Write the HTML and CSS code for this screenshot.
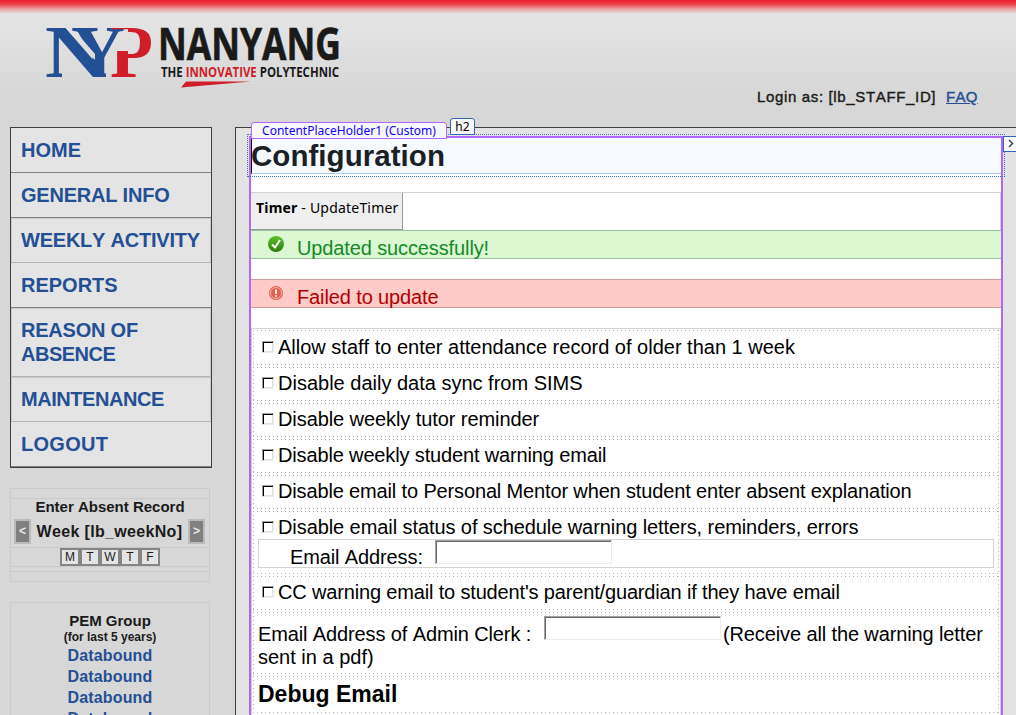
FILE: index.html
```
<!DOCTYPE html>
<html lang="en">
<head>
<meta charset="utf-8">
<title>Configuration</title>
<link rel="stylesheet" href="styles.css">
</head>
<body>
<div class="page">
  <header class="header">
    <svg class="logo" width="310" height="72" viewBox="40 20 310 72" role="img" aria-label="Nanyang Polytechnic">
      <defs>
        <clipPath id="clip-n"><polygon points="44,24 62,24 95,60 95,44 106,44 106,78 84,78 62,49 62,78 44,78"/></clipPath>
        <clipPath id="clip-y"><polygon points="68,24 126,24 126,34 106,54 106,78 95,78 95,54 76,32 68,30"/></clipPath>
        <clipPath id="clip-p"><path clip-rule="evenodd" d="M108 24H154V78H108ZM110 29.200H128V51H110Z"/></clipPath>
      </defs>
      <g class="mark">
        <g clip-path="url(#clip-n)"><text x="45" y="76.500" textLength="61" lengthAdjust="spacingAndGlyphs" fill="#234f95">N</text></g>
        <g clip-path="url(#clip-y)"><text x="71" y="76.500" textLength="54" lengthAdjust="spacingAndGlyphs" fill="#234f95">Y</text></g>
        <g clip-path="url(#clip-p)"><text x="110" y="76.500" textLength="43" lengthAdjust="spacingAndGlyphs" fill="#cf1e28">P</text></g>
      </g>
      <text class="logo-name" x="158" y="59.500" textLength="183" lengthAdjust="spacingAndGlyphs">NANYANG</text>
      <text class="logo-sub" x="161" y="76.500" textLength="178" lengthAdjust="spacingAndGlyphs">THE <tspan fill="#cf1e28">INNOVATIVE</tspan> POLYTECHNIC</text>
      <polygon points="186,81.500 251,81.500 181,87.500" fill="#cf1e28"/>
    </svg>
    <div class="login"><span class="login-as">Login as: [lb_STAFF_ID]</span><a class="faq" href="#">FAQ</a></div>
  </header>
  <div class="columns">
    <aside class="side">
      <nav class="menu">
        <a href="#" class="l1">HOME</a>
        <a href="#" class="l2">GENERAL INFO</a>
        <a href="#" class="boxed l3">WEEKLY ACTIVITY</a>
        <a href="#" class="l4">REPORTS</a>
        <a href="#" class="boxed l5">REASON OF<br><span class="l5b">ABSENCE</span></a>
        <a href="#" class="boxed l6">MAINTENANCE</a>
        <a href="#" class="l7">LOGOUT</a>
      </nav>
      <section class="absent">
        <div class="absent-top"></div>
        <div class="absent-main">
          <h3>Enter Absent Record</h3>
          <div class="week"><span class="step">&lt;</span><b>Week [lb_weekNo]</b><span class="step">&gt;</span></div>
        </div>
        <div class="days"><span>M</span><span>T</span><span>W</span><span>T</span><span>F</span></div>
        <div class="absent-gap"></div>
      </section>
      <section class="pem">
        <h3>PEM Group</h3>
        <p>(for last 5 years)</p>
        <a href="#">Databound</a>
        <a href="#">Databound</a>
        <a href="#">Databound</a>
        <a href="#">Databound</a>
      </section>
    </aside>
    <main class="main">
      <div class="holder">
        <h2>Configuration</h2>
        <div class="timer-row"><div class="timer"><b>Timer</b> - UpdateTimer</div></div>
        <div class="msg ok">
          <svg width="18" height="18" viewBox="0 0 18 18"><defs><linearGradient id="g" x2="0" y2="1"><stop offset="0" stop-color="#5fc02a"/><stop offset="1" stop-color="#2c7d0c"/></linearGradient></defs><circle cx="9" cy="9" r="8" fill="url(#g)"/><path d="M5 9.500L8 12.500L13 5" fill="none" stroke="#fff" stroke-width="2"/></svg>
          <span>Updated successfully!</span>
        </div>
        <div class="msg bad">
          <svg width="18" height="18" viewBox="0 0 18 18"><circle cx="9" cy="9" r="7" fill="#e2604f"/><circle cx="9" cy="9" r="5.500" fill="none" stroke="#f6c1b4" stroke-width=".8"/><path d="M9 5.500V10M9 11.200V12.800" stroke="#fff" stroke-width="1.800"/></svg>
          <span>Failed to update</span>
        </div>
        <div class="form">
          <div class="row first"><i class="check"></i><span class="t1">Allow staff to enter attendance record of older than 1 week</span></div>
          <div class="row"><i class="check"></i><span class="t2">Disable daily data sync from SIMS</span></div>
          <div class="row"><i class="check"></i><span class="t3">Disable weekly tutor reminder</span></div>
          <div class="row"><i class="check"></i><span class="t4">Disable weekly student warning email</span></div>
          <div class="row"><i class="check"></i><span class="t5">Disable email to Personal Mentor when student enter absent explanation</span></div>
          <div class="row tall"><i class="check"></i><span class="t6">Disable email status of schedule warning letters, reminders, errors</span>
            <div class="email-box"><span class="t7">Email Address:</span><i class="field"></i></div>
          </div>
          <div class="row"><i class="check"></i><span class="t8">CC warning email to student's parent/guardian if they have email</span></div>
          <div class="row clerk"><div class="clerk-line"><span class="t9">Email Address of Admin Clerk :</span><i class="field"></i><span class="t10">(Receive all the warning letter</span></div><span class="t11">sent in a pdf)</span></div>
          <div class="row debug"><span>Debug Email</span></div>
          <div class="row"></div>
        </div>
        <div class="h2-outline"></div>
        <div class="tag holder-tag">ContentPlaceHolder1 (Custom)</div>
        <div class="tag h2-tag">h2</div>
        <div class="smart-tag"><svg width="8" height="10" viewBox="0 0 8 10"><path d="M2 1L5.500 4.500L2 8" fill="none" stroke="#2b4c80" stroke-width="1.500"/></svg></div>
      </div>
    </main>
  </div>
</div>
</body>
</html>
```
FILE: styles.css
```
* { box-sizing: border-box; }
body { margin: 0; font-family: "Liberation Sans", Arial, sans-serif; color: #1a1a1a; font-kerning: none; }
a { color: #234f95; text-decoration: none; }
h2, h3, p { margin: 0; }
.page { width: 1016px; height: 715px; overflow: hidden; background: linear-gradient(#e81f2c 0, #ec4048 4px, #e8a0a2 9px, #e4e4e4 14px, #e3e3e3 25px, #d7d7d7 95px); }
.header { height: 127px; padding: 20px 38px 0 40px; display: flex; justify-content: space-between; }
.logo { display: block; }
.mark { font: bold 74px "Liberation Serif", serif; }
.logo-name { font: bold 45px "Open Sans", sans-serif; fill: #1a1a1a; stroke: #1a1a1a; stroke-width: .7px; }
.logo-sub { font: bold 13.500px "Open Sans", sans-serif; fill: #1a1a1a; }
.login { padding-top: 68px; font-size: 15px; line-height: 17px; display: flex; gap: 9px; -webkit-text-stroke: .4px; }
.login-as { width: 180px; letter-spacing: .65px; white-space: nowrap; }
.faq { width: 32px; text-decoration: underline; letter-spacing: .3px; }
.columns { display: flex; height: 588px; }
.side { width: 202px; margin-left: 10px; flex: none; }
.menu { border: 1px solid #3f3f3f; background: #e4e4e4; font-weight: bold; font-size: 20px; line-height: 24px; height: 341px; }
.menu a { display: block; padding: 10px; border-bottom: 1px solid #808080; white-space: nowrap; }
.menu a.boxed { border: 1px solid #cacaca; border-bottom-color: #b4b4b4; padding: 9px 9px 10px; }
.menu .l2, .menu .l3, .menu .l5 { letter-spacing: -.22px; }
.menu .l5b { letter-spacing: -.5px; }
.menu .l6 { letter-spacing: -.45px; }
.menu .l7 { letter-spacing: .3px; }
.absent { width: 200px; height: 94px; margin-top: 20px; border: 1px solid #cacaca; text-align: center; }
.absent-top { height: 10px; border-bottom: 1px solid #cacaca; }
.absent-main { height: 49px; border-bottom: 1px solid #cacaca; }
h3 { font-size: 15px; line-height: 15px; padding-bottom: 2px; }
.week { display: flex; justify-content: space-between; align-items: center; padding: 0 4px 0 3px; margin-top: 3px; }
.week b { font-size: 16px; line-height: 25px; white-space: nowrap; letter-spacing: .33px; }
.step { width: 17px; height: 25px; background: #808080; border: 2px solid #bbb; color: #e8e8e8; font-size: 12px; font-weight: bold; line-height: 21px; }
.days { display: flex; justify-content: center; height: 19px; border-bottom: 1px solid #cacaca; }
.days span { width: 20px; height: 18px; border: 2px solid #858585; background: #e4e4e4; font-size: 12px; line-height: 15px; }
.absent-gap { height: 5px; border-bottom: 1px solid #cacaca; }
.pem { width: 200px; height: 140px; margin-top: 20px; padding-top: 10px; border: 1px solid #cacaca; text-align: center; font-weight: bold; }
.pem p { font-size: 12px; line-height: 15px; }
.pem a { display: block; font-size: 16px; line-height: 21px; letter-spacing: .15px; }
.main { flex: none; width: 800px; margin-left: 23px; padding: 9px 0 0 13px; border: solid #3f3f3f; border-width: 1px 0 0 1px; background: #e3e3e3; }
.holder { position: relative; width: 754px; height: 600px; border: 2px solid #b266ff; background: #fff; color: #000; margin-top: -1px; }
h2 { height: 36px; border-left: 1px solid #111; border-bottom: 1px solid #a9c9ee; background: #f6faff; color: #1b1f26; font-size: 29.500px; line-height: 35px; text-indent: -1px; letter-spacing: .05px; }
.timer-row { margin-top: 18px; height: 38px; border: solid #d3d3d3; border-width: 1px 1px 0 0; }
.timer { width: 152px; height: 37px; border: solid #999; border-width: 0 1px 1px 0; background: #efefef; font: 14px/29px "Noto Sans", "Open Sans", sans-serif; letter-spacing: .2px; padding-left: 5px; white-space: nowrap; }
.msg { height: 29px; display: flex; padding-left: 16px; gap: 12px; font-size: 20px; line-height: 35px; letter-spacing: -.12px; }
.msg svg { margin-top: 4px; }
.ok { border: solid #94bfa0; border-width: 1px 0; background: #dbf8d3; color: #148a28; }
.bad { margin-top: 20px; border: solid #c9a0a0; border-width: 1px 0; background: #ffcbc9; color: #b00000; }
.form { margin-top: 20px; height: 400px; border: 1px solid #d3d3d3; padding: 1px 1px 0; font-size: 20px; line-height: 23px; }
.row {
  --across: repeating-linear-gradient(90deg, #b4b4b4 0 1px, transparent 1px 4px);
  --down: repeating-linear-gradient(#b4b4b4 0 1px, transparent 1px 4px);
  height: 34px; margin-bottom: 2px; padding: 5px 5px 0 6px; white-space: nowrap;
  background: var(--across) 0 0 / 100% 1px no-repeat, var(--across) 0 100% / 100% 1px no-repeat, var(--down) 0 0 / 1px 100% no-repeat, var(--down) 100% 0 / 1px 100% no-repeat;
}
.row.first { height: 35px; padding-top: 6px; }
.check { display: inline-block; width: 12px; height: 12px; margin: 0 4px 0 3px; vertical-align: 1px; border: 1px solid; border-color: #a0a0a0 #ececec #ececec #a0a0a0; box-shadow: inset 1px 1px #000, inset -1px -1px #e3e3e3; }
.t3, .t6 { letter-spacing: -.08px; }
.t4, .t5 { letter-spacing: -.145px; }
.t8 { letter-spacing: -.16px; }
.t7, .t9, .t10 { letter-spacing: -.12px; }
.row.tall { height: 63px; }
.email-box { width: 736px; height: 29px; margin: 0 0 0 -1px; padding: 0 0 0 31px; border: 1px solid #d3d3d3; display: flex; line-height: 34px; }
.t7 { width: 145px; }
.field { flex: none; width: 177px; height: 24px; border: 1px solid; border-color: #a0a0a0 #ededed #ededed #a0a0a0; box-shadow: inset 1px 1px #696969; }
.row.clerk { height: 62px; padding: 5px 0 0 5px; }
.clerk-line { display: flex; height: 29px; line-height: 35px; }
.clerk-line .field { margin-top: -1px; }
.t9 { width: 286px; }
.t10 { margin-left: 2px; }
.t11 { display: block; }
.row.debug { height: 37px; padding: 7px 0 0 5px; font-size: 23px; font-weight: bold; }
.h2-outline { position: absolute; left: -4px; top: -4px; width: 758px; height: 43px; border: 1px dotted #3b6fc4; }
.tag { position: absolute; background: #f8f8fb; font: 12px/15px "Noto Sans", sans-serif; text-align: center; border-radius: 3px 3px 0 0; white-space: nowrap; }
.holder-tag { left: 0; top: -16px; width: 196px; height: 17px; border: 1px solid #b266ff; color: #10f; }
.h2-tag { left: 199px; top: -20px; width: 25px; height: 17px; border: 1px solid #2f66b5; }
.smart-tag { position: absolute; left: 752px; top: -2px; width: 20px; height: 16px; border: 1px solid #2f66b5; background: #fafafa; padding: 2px 0 0 3px; line-height: 0; }
```
